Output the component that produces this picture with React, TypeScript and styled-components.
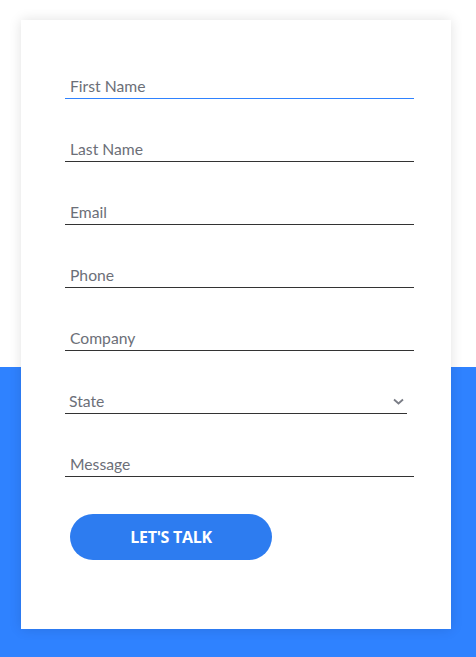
import React from "react";
import styled, { createGlobalStyle } from "styled-components";

const Global = createGlobalStyle`
  html, body {
    margin: 0;
    padding: 0;
  }
  body {
    font-family: "Lato", "Liberation Sans", sans-serif;
  }
`;

const Pagina = styled.div`
  width: 476px;
  height: 657px;
  background: linear-gradient(#ffffff 0, #ffffff 367px, #2f82ff 367px);
  padding-top: 20px;
  box-sizing: border-box;
  overflow: hidden;
`;

const Cartao = styled.form`
  width: 430px;
  height: 609px;
  margin-left: 21px;
  background: #ffffff;
  box-shadow: 0 0 12px rgba(0, 0, 0, 0.12);
  box-sizing: border-box;
  padding: 52px 37px 0 44px;
  display: flex;
  flex-direction: column;
`;

const Campo = styled.input`
  display: block;
  width: 349px;
  height: 27px;
  margin: 0 0 36px;
  padding: 2px 5px 0;
  border: none;
  border-bottom: 1px solid #333333;
  box-sizing: border-box;
  font-family: "Lato", "Liberation Sans", sans-serif;
  font-size: 15.7px;
  color: #333;
  background: transparent;
  outline: none;
  caret-color: #000;

  &::placeholder {
    color: #6c6f78;
  }

  &:focus {
    border-bottom-color: #2f82ff;
  }
`;

const SeletorCaixa = styled.div`
  position: relative;
  width: 342px;
  margin-bottom: 36px;
`;

const Seletor = styled.select`
  display: block;
  width: 100%;
  height: 27px;
  padding: 2px 4px 0;
  border: none;
  border-bottom: 1px solid #333333;
  border-radius: 0;
  box-sizing: border-box;
  appearance: none;
  -webkit-appearance: none;
  background: transparent;
  font-family: "Lato", "Liberation Sans", sans-serif;
  font-size: 15.7px;
  color: #6c6f78;
  outline: none;
`;

const Seta = styled.svg`
  position: absolute;
  right: 3px;
  top: 11px;
  pointer-events: none;
`;

const Botao = styled.button`
  width: 202px;
  height: 46px;
  margin: 1px 0 0 5px;
  border: none;
  border-radius: 23px;
  background: #2d7cf0;
  color: #ffffff;
  font-family: "Open Sans", "Liberation Sans", sans-serif;
  font-weight: 700;
  font-size: 16px;
  letter-spacing: -0.3px;
  cursor: pointer;
`;

const App = () => {
  return (
    <>
      <Global />
      <Pagina>
        <Cartao onSubmit={(e) => e.preventDefault()}>
          <Campo type="text" placeholder="First Name" autoFocus />
          <Campo type="text" placeholder="Last Name" />
          <Campo type="email" placeholder="Email" />
          <Campo type="tel" placeholder="Phone" />
          <Campo type="text" placeholder="Company" />
          <SeletorCaixa>
            <Seletor defaultValue="">
              <option value="" disabled>
                State
              </option>
            </Seletor>
            <Seta width="11" height="7" viewBox="0 0 11 7">
              <path d="M1 1.5 L5.5 5.5 L10 1.5" fill="none" stroke="#7a7d86" strokeWidth="1.8" />
            </Seta>
          </SeletorCaixa>
          <Campo type="text" placeholder="Message" />
          <Botao type="submit">LET'S TALK</Botao>
        </Cartao>
      </Pagina>
    </>
  );
};

export default App;
